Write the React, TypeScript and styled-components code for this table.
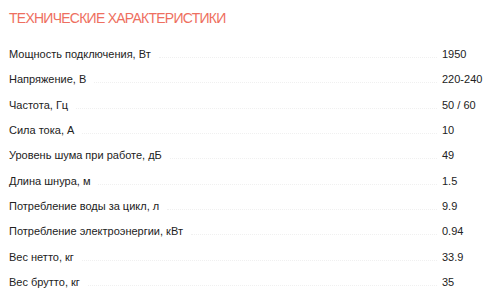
import React from "react";
import styled, { createGlobalStyle } from "styled-components";

const Global = createGlobalStyle`
  html, body { margin: 0; padding: 0; background: #fff; }
  body { font-family: "Liberation Sans", Arial, sans-serif; }
`;

const Page = styled.div`
  width: 500px;
  height: 306px;
  box-sizing: border-box;
  padding: 10px 8px 0 9px;
  display: flex;
  flex-direction: column;
`;

const Title = styled.h2`
  margin: 0 0 22px 0;
  font-size: 14px;
  font-weight: 400;
  line-height: 16px;
  color: #ee6f60;
  letter-spacing: -0.75px;
`;

const List = styled.div`
  display: flex;
  flex-direction: column;
`;

const Row = styled.div`
  display: flex;
  align-items: baseline;
  height: 25.33px;
  font-size: 11px;
  color: #222;
`;

const Label = styled.span`
  white-space: nowrap;
`;

const Leader = styled.span`
  flex: 1;
  margin: 0 5px 0 8px;
  border-bottom: 1px dotted #f0f0f0;
`;

const Value = styled.span`
  width: 50px;
  white-space: nowrap;
`;

const specs: [string, string][] = [
  ["Мощность подключения, Вт", "1950"],
  ["Напряжение, В", "220-240"],
  ["Частота, Гц", "50 / 60"],
  ["Сила тока, А", "10"],
  ["Уровень шума при работе, дБ", "49"],
  ["Длина шнура, м", "1.5"],
  ["Потребление воды за цикл, л", "9.9"],
  ["Потребление электроэнергии, кВт", "0.94"],
  ["Вес нетто, кг", "33.9"],
  ["Вес брутто, кг", "35"],
];

export default function App() {
  return (
    <>
      <Global />
      <Page>
        <Title>ТЕХНИЧЕСКИЕ ХАРАКТЕРИСТИКИ</Title>
        <List>
          {specs.map(([k, v]) => (
            <Row key={k}>
              <Label>{k}</Label>
              <Leader />
              <Value>{v}</Value>
            </Row>
          ))}
        </List>
      </Page>
    </>
  );
}
